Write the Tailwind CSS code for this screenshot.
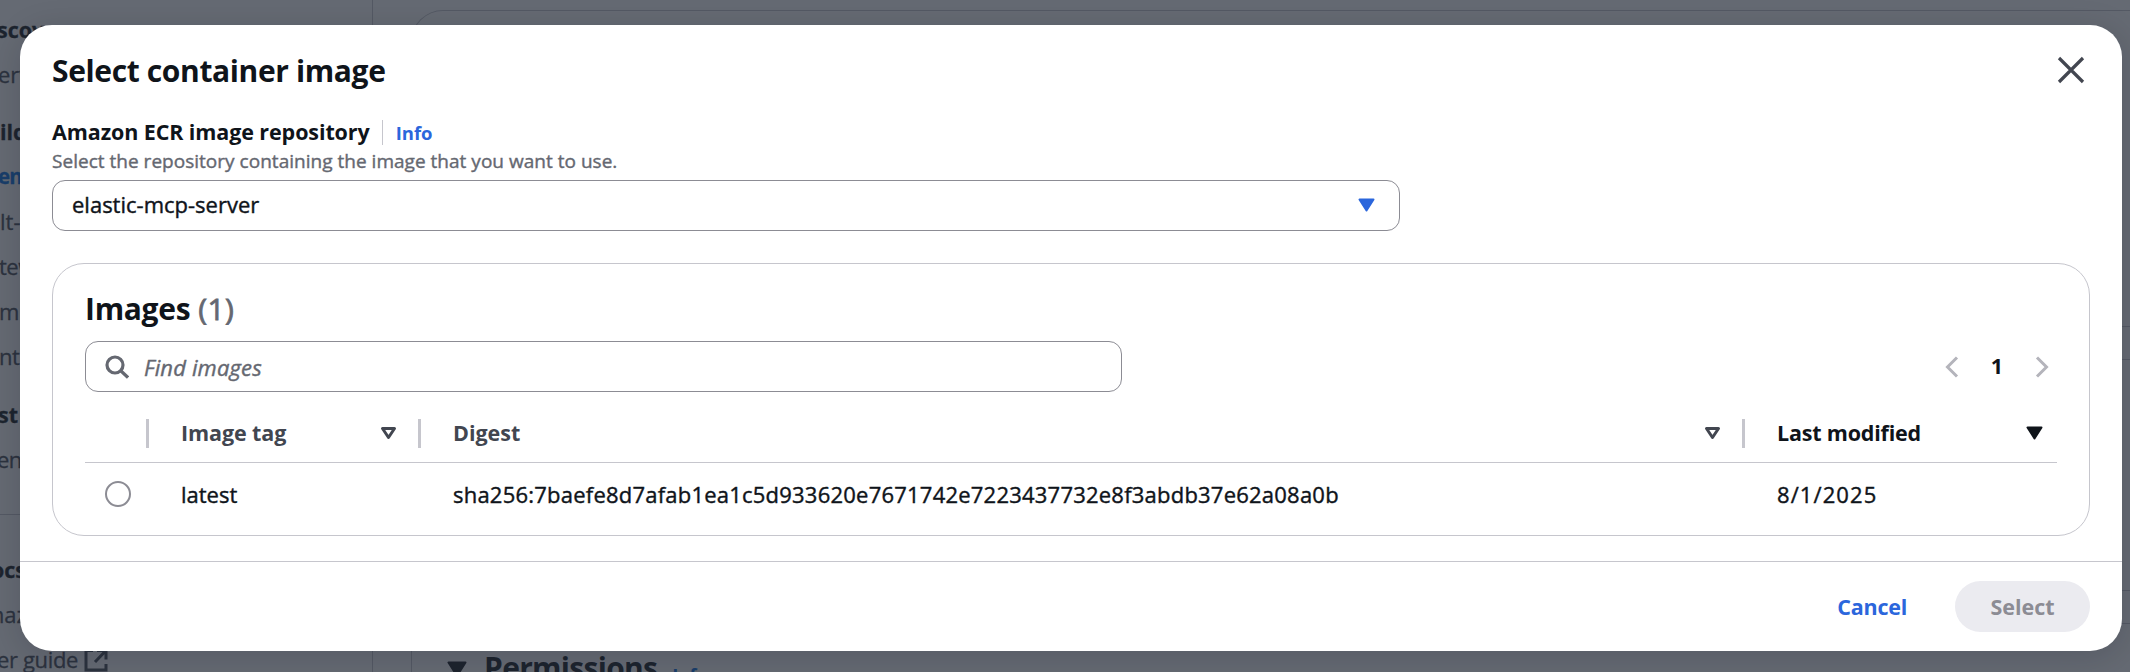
<!DOCTYPE html>
<html lang="en">
<head>
<meta charset="utf-8">
<title>Select container image</title>
<script src="https://cdn.jsdelivr.net/npm/@tailwindcss/browser@4"></script>
</head>
<body class="relative h-[672px] w-[2130px] overflow-hidden bg-white font-['Open_Sans',sans-serif] text-[22px] text-[#0f141a]">

<!-- Page behind the dialog -->
<div class="flex h-[672px] overflow-hidden whitespace-nowrap" aria-hidden="true">
  <nav class="h-[672px] w-[373px] shrink-0 overflow-hidden border-r border-[#c6c6cd] pt-[7px] leading-[45px] text-[#424650] [-webkit-text-stroke:0.3px]">
    <div class="-ml-[3px] h-[45px] text-[21.5px] font-bold text-[#0f141a]">scover</div>
    <div class="-ml-[2px] h-[45px]">erv</div>
    <div class="mt-[12px] h-[45px] text-[21.5px] font-bold text-[#0f141a]">ild</div>
    <div class="-ml-[2px] h-[45px] text-[20.500px] font-bold tracking-[-0.8px] text-[#006ce0]">en</div>
    <div class="h-[45px]">lt-</div>
    <div class="-ml-px h-[45px] tracking-[-0.5px]">tew</div>
    <div class="-ml-px h-[45px]">m</div>
    <div class="-ml-px h-[45px] tracking-[-0.5px]">nt</div>
    <div class="-ml-[2px] mt-[12px] h-[45px] pt-px text-[21.5px] font-bold text-[#0f141a]">st</div>
    <div class="-ml-[3px] h-[45px] pt-px tracking-[-0.5px]">en</div>
    <div class="mt-[33px] h-px bg-[#c6c6cd]"></div>
    <div class="-ml-[9px] mt-[32px] h-[45px] text-[21.5px] font-bold text-[#0f141a]">ocs</div>
    <div class="-ml-[16px] h-[45px]">maz</div>
    <div class="-ml-[3px] flex h-[45px] items-center gap-[6px]"><span class="tracking-[-0.35px]">er guide</span>
      <svg class="size-[24px]" viewBox="0 0 24 24" fill="none" stroke="currentColor" stroke-width="3"><path d="M9 2.500H2v19.500h20v-6M13 2.500h9v9M22 2.500 11 14"/></svg>
    </div>
  </nav>
  <main class="flex grow flex-col pl-[38px] pt-[10px]">
    <div class="h-[540px] w-[1760px] shrink-0 rounded-t-[32px] border border-b-0 border-[#c6c6cd] pt-[315px]">
      <div class="h-[34px] border-y border-[#c6c6cd]"></div>
    </div>
    <div class="mt-[40px] h-[34px] w-[1760px] shrink-0 border-y border-[#c6c6cd]"></div>
    <div class="flex h-[120px] w-[1760px] shrink-0 items-start border-l border-[#c6c6cd] pt-[24px] pl-[35px]">
      <svg class="mt-[13px] h-[17px] w-[20px]" viewBox="0 0 20 17"><path d="M1.500 1.500h17L10 15z" fill="currentColor" stroke="currentColor" stroke-width="2" stroke-linejoin="round"/></svg>
      <span class="ml-[17px] text-[30px] leading-[40px] font-bold tracking-[-0.7px]">Permissions</span>
      <span class="ml-[15px] text-[18.500px] leading-[53px] font-bold tracking-[-0.6px] text-[#006ce0]">Info</span>
    </div>
  </main>
</div>

<!-- Dialog -->
<div class="absolute inset-0 bg-[#232b37]/70 pt-[25px] pl-[20px]">
  <section class="flex h-[626px] w-[2102px] flex-col rounded-[32px] bg-white shadow-[0_6px_32px_2px_rgba(0,7,22,0.14)]">
    <div class="flex grow flex-col px-[32px] pt-[25px]">
      <header class="flex h-[40px] items-center justify-between">
        <h1 class="pt-[2px] text-[30px] leading-[40px] font-bold tracking-[-0.37px]">Select container image</h1>
        <svg class="mr-[5px] mb-px size-[28px]" viewBox="0 0 28 28" fill="none" stroke="#424650" stroke-width="3.2"><path d="M2 2 26 26M26 2 2 26"/></svg>
      </header>

      <div class="mt-[29px] flex h-[26px] items-center">
        <span class="text-[21.5px] leading-[26px] font-bold tracking-[-0.1px]">Amazon ECR image repository</span>
        <span class="ml-[12px] h-[25px] w-px bg-[#c6c6cd]"></span>
        <a class="ml-[13px] pt-px text-[18.5px] leading-[26px] font-bold text-[#2b66dc]">Info</a>
      </div>
      <p class="mt-[4px] text-[19px] leading-[24px] tracking-[0.02px] text-[#656871] [-webkit-text-stroke:0.4px]">Select the repository containing the image that you want to use.</p>
      <div class="mt-[7px] flex h-[51px] w-[1348px] items-center justify-between rounded-[13px] border border-[#8c8c94] pr-[24px] pb-[2px] pl-[19px]">
        <span class="[-webkit-text-stroke:0.4px]">elastic-mcp-server</span>
        <svg class="h-[14px] w-[17px]" viewBox="0 0 17 14"><path d="M1.500 1.500h14L8.500 12.500z" fill="#2b66dc" stroke="#2b66dc" stroke-width="2" stroke-linejoin="round"/></svg>
      </div>

      <div class="mt-[32px] h-[273px] rounded-[32px] border border-[#c6c6cd] px-[32px] pt-[24px]">
        <h2 class="flex h-[40px] gap-[8px] pt-px text-[30px] leading-[40px]"><span class="font-bold tracking-[-0.3px]">Images</span><span class="tracking-[0.4px] text-[#656871] [-webkit-text-stroke:0.8px]">(1)</span></h2>
        <div class="mt-[13px] flex items-center justify-between">
          <div class="flex h-[51px] w-[1037px] items-center gap-[15px] rounded-[13px] border border-[#8c8c94] pl-[19px]">
            <svg class="size-[24px]" viewBox="0 0 24 24" fill="none" stroke="#656871" stroke-width="3.2"><circle cx="10" cy="10" r="8"/><path d="m15.500 15.500 7.500 7"/></svg>
            <span class="pt-px text-[22px] tracking-[0.15px] text-[#656871] italic [-webkit-text-stroke:0.4px]">Find images</span>
          </div>
          <div class="mr-[8px] flex items-center">
            <svg class="h-[22px] w-[14px]" viewBox="0 0 14 22" fill="none" stroke="#b4b4bb" stroke-width="3"><path d="m12 1.500-9.500 9.500 9.500 9.500"/></svg>
            <span class="w-[76px] text-center text-[21.5px] font-bold">1</span>
            <svg class="h-[22px] w-[14px]" viewBox="0 0 14 22" fill="none" stroke="#b4b4bb" stroke-width="3"><path d="m2 1.500 9.500 9.500-9.500 9.500"/></svg>
          </div>
        </div>

        <div class="grid h-[71px] grid-cols-[64px_272px_1324px_1fr] items-center border-b border-[#c6c6cd] pt-[13px] text-[21.5px] font-bold text-[#424650]">
          <div class="h-[29px] border-r-3 border-[#c6c6cd]"></div>
          <div class="flex h-[29px] items-center justify-between border-r-3 border-[#c6c6cd] pr-[21px] pl-[32px]">
            <span class="tracking-[-0.1px]">Image tag</span>
            <svg class="mb-px h-[14px] w-[17px]" viewBox="0 0 17 14"><path d="M2.500 2.500h12L8.500 11.500z" fill="none" stroke="#424650" stroke-width="3" stroke-linejoin="round"/></svg>
          </div>
          <div class="flex h-[29px] items-center justify-between border-r-3 border-[#c6c6cd] pr-[21px] pl-[32px]">
            <span>Digest</span>
            <svg class="mb-px h-[14px] w-[17px]" viewBox="0 0 17 14"><path d="M2.500 2.500h12L8.500 11.500z" fill="none" stroke="#424650" stroke-width="3" stroke-linejoin="round"/></svg>
          </div>
          <div class="flex h-[29px] items-center justify-between pr-[14px] pl-[32px] text-[#0f141a]">
            <span class="tracking-[-0.2px]">Last modified</span>
            <svg class="mb-px h-[14px] w-[17px]" viewBox="0 0 17 14"><path d="M1.500 1.500h14L8.500 12.500z" fill="currentColor" stroke="currentColor" stroke-width="2" stroke-linejoin="round"/></svg>
          </div>
        </div>
        <div class="grid h-[63px] grid-cols-[64px_272px_1324px_1fr] items-center [-webkit-text-stroke:0.4px]">
          <div class="mb-px ml-[20px] size-[26px] rounded-full border-2 border-[#8c8c94]"></div>
          <div class="pl-[32px]">latest</div>
          <div class="pl-[32px] tracking-[0.22px]">sha256:7baefe8d7afab1ea1c5d933620e7671742e7223437732e8f3abdb37e62a08a0b</div>
          <div class="pl-[32px] tracking-[1.1px]">8/1/2025</div>
        </div>
      </div>
    </div>

    <footer class="flex h-[90px] items-start justify-end border-t border-[#c6c6cd] pt-[19px] pr-[32px] text-[21.5px] font-bold">
      <button class="h-[51px] px-[48px] pt-px tracking-[-0.25px] text-[#2b66dc]">Cancel</button>
      <button class="h-[51px] w-[135px] rounded-full bg-[#ebebf0] pt-px text-[#8c8c94]">Select</button>
    </footer>
  </section>
</div>
</body>
</html>
